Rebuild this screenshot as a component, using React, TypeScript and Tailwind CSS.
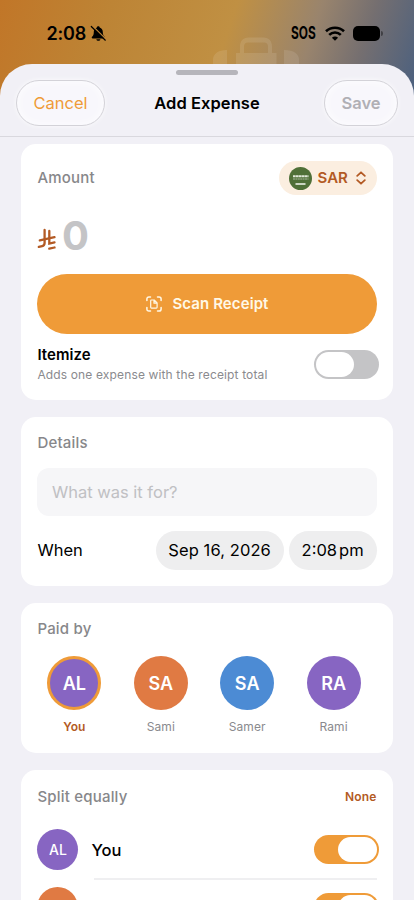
import React from 'react';
import clsx from 'clsx';

const people = [
  { initials: 'AL', name: 'You', color: 'bg-[#8765c2]' },
  { initials: 'SA', name: 'Sami', color: 'bg-[#e07a43]' },
  { initials: 'SA', name: 'Samer', color: 'bg-[#4c8bd4]' },
  { initials: 'RA', name: 'Rami', color: 'bg-[#8765c2]' },
];

function BellOff() {
  return (
    <svg width="17" height="17" viewBox="0 0 17 17" fill="none">
      <path d="M8.3 1.2c-.8 0-1.3.5-1.4 1.2C4.900 3.100 3.800 4.800 3.800 7c0 2.500-.5 3.500-1.500 4.500-.5.5-.6.8-.6 1.100 0 .5.3.8.9.8H14c.6 0 .9-.3.9-.8 0-.3-.1-.6-.6-1.100-1-1-1.500-2-1.500-4.500 0-2.200-1.100-3.900-3.100-4.600-.1-.7-.6-1.200-1.400-1.200z" fill="black" />
      <path d="M6.300 14.200h4.100c-.2 1-1 1.600-2 1.600s-1.900-.6-2.100-1.600z" fill="black" />
      <path d="M2.300 0.800 L16.300 14.500" stroke="#c08637" strokeWidth="1.200" />
      <path d="M1.300 1.500 L15.300 15.200" stroke="black" strokeWidth="1.200" strokeLinecap="round" />
    </svg>
  );
}

function Wifi() {
  return (
    <svg width="20" height="15" viewBox="0 0 20 15" fill="none" stroke="black" strokeWidth="2.600">
      <path d="M1 5.300C6 .5 14 .5 19 5.300" />
      <path d="M4.200 8.900c3.300-3.200 8.300-3.200 11.600 0" />
      <path d="M6.900 11.700c1.800-1.700 4.400-1.700 6.200 0L10 14.800z" fill="black" stroke="none" />
    </svg>
  );
}

function StatusBar() {
  return (
    <div className="relative flex h-16 items-start justify-between pl-[46.500px] pr-[31.500px] pt-[23px]">
      <div className="flex h-[21px] items-center">
        <span className="w-[39px] whitespace-nowrap text-[18px] font-semibold tracking-[-0.2px]">2:08</span>
        <span className="ml-[4px]"><BellOff /></span>
      </div>
      <div className="flex h-[21px] items-center">
        <span className="mt-px w-[26px] origin-left scale-x-[0.7] whitespace-nowrap text-[17px] font-bold">SOS</span>
        <span className="ml-[8px]"><Wifi /></span>
        <span className="ml-[8px] h-[15px] w-[27px] rounded-[5px] bg-black" />
        <span className="ml-[1px] h-[5px] w-[1.500px] rounded-r-full bg-black/40" />
      </div>
    </div>
  );
}

function Suitcase() {
  return (
    <svg className="absolute left-[212px] top-[36px]" width="90" height="40" viewBox="0 0 90 40" fill="none">
      <g opacity="0.100">
        <path d="M24 40V17h4v-6c0-6 3-9.500 8.500-9.500h15C57 1.500 60 5 60 11v6h4.500v23zM32 17h24v-6c0-3-1-4.500-4-4.500H36c-3 0-4 1.500-4 4.500z" fill="white" fillRule="evenodd" />
        <path d="M15 14v26H1V24c0-6 5-10 14-10zM72 14v26h15V24c0-6-5-10-15-10z" fill="white" />
      </g>
    </svg>
  );
}

function RiyalSign() {
  return (
    <svg width="19" height="22" viewBox="0 0 19 22" fill="none" stroke="#b35a24" strokeWidth="2.300" strokeLinecap="round">
      <path d="M7.600 2v13c0 1.800-.7 2.700-2.400 3.100l-3.400.8" />
      <path d="M12.300 3V15.500l5.200-1.200" />
      <path d="M2.800 12.400l14.700-3.200" />
      <path d="M12.300 20.700l5.200-1.200" />
    </svg>
  );
}

function SaudiFlag() {
  return (
    <svg width="23" height="23" viewBox="0 0 23 23">
      <circle cx="11.500" cy="11.500" r="11.500" fill="#4f7038" />
      <path d="M4 9.200h15.500" stroke="#dfe7d8" strokeWidth="2" strokeDasharray="2.600 .3" />
      <path d="M4 12h15.500" stroke="#e8eee2" strokeWidth="1" strokeDasharray="2 .4" opacity=".6" />
      <path d="M6.500 17h10M15 16.200v1.600" stroke="#f4f7f0" strokeWidth="1.300" />
    </svg>
  );
}

function ScanIcon() {
  return (
    <svg width="16" height="16" viewBox="0 0 16 16" fill="none" stroke="#fff8e6" strokeWidth="1.500" strokeLinecap="round" strokeLinejoin="round">
      <path d="M.9 4.500V3c0-1.400.7-2.100 2.100-2.100h1.500M11.500.9H13c1.400 0 2.100.7 2.100 2.100v1.500M15.100 11.500V13c0 1.400-.7 2.100-2.100 2.100h-1.500M4.500 15.100H3C1.600 15.100.9 14.400.9 13v-1.500" />
      <path d="M5.500 4h2.700l2.900 3v4.300c0 .5-.3.8-.8.800H5.500c-.5 0-.8-.3-.8-.8V4.800c0-.5.300-.8.800-.8zM8 4.200v3h3" strokeWidth="1.200" />
    </svg>
  );
}

function Toggle({ on }: { on?: boolean }) {
  return (
    <div
      className={clsx(
        '-mr-[2px] flex h-[29px] w-[65px] shrink-0 items-center rounded-full px-[2px]',
        on ? 'justify-end bg-[#ef9b38]' : 'bg-[#c4c4c6]'
      )}
    >
      <div className="h-[25px] w-[38.500px] rounded-full bg-white" />
    </div>
  );
}

function Card({ className, children }: { className?: string; children: React.ReactNode }) {
  return (
    <section className={clsx('flex shrink-0 flex-col rounded-[15px] bg-white px-[16.400px]', className)}>
      {children}
    </section>
  );
}

function Title({ children }: { children: React.ReactNode }) {
  return <h2 className="whitespace-nowrap text-[15px] font-medium leading-5 tracking-[0.2px] text-[#87878a]">{children}</h2>;
}

const glass = 'flex h-[46px] items-center justify-center rounded-full border border-[#d3d2d8] bg-[#f8f7fc] shadow-[inset_0_0_8px_1px_rgba(255,255,255,0.7),0_0_5px_rgba(255,255,255,0.8)]';

export default function App() {
  return (
    <div className="relative flex h-[900px] w-[414px] flex-col overflow-hidden bg-[#f1f0f6] font-['Inter','Liberation_Sans',sans-serif] text-black">
      <div className="absolute inset-x-0 top-0 h-[110px] bg-[linear-gradient(108deg,#c17628_0%,#bd8435_25%,#c09043_53%,#99846d_72%,#756f70_84%,#485f80_100%)]" />
      <Suitcase />
      <StatusBar />

      <main className="relative flex flex-1 flex-col overflow-hidden rounded-t-[32px] bg-[#f1f0f6]">
        <header className="relative flex h-[73px] shrink-0 items-start justify-between border-b border-[#d9d8de] px-4 pt-4">
          <div className="absolute left-[176px] top-[6px] h-[4.500px] w-[62px] rounded-full bg-[#b6b5bb]" />
          <button className={clsx(glass, 'w-[89px] text-[16.500px] text-[#ef9b38]')}>Cancel</button>
          <h1 className="absolute inset-x-0 top-[27px] text-center text-[16.500px] font-semibold leading-6 tracking-[0.05px]">Add Expense</h1>
          <button className={clsx(glass, 'w-[74px] text-[16.500px] font-semibold text-[#b0afb5]')}>Save</button>
        </header>

        <div className="flex flex-col gap-[17px] px-[21px] pt-[7px]">
          <Card className="h-[256px]">
            <div className="mt-[17px] flex h-[34px] items-center justify-between">
              <Title>Amount</Title>
              <div className="flex h-[34px] w-[98px] items-center rounded-full bg-[#fbeee0] pl-[10px] text-[#b35a24]">
                <SaudiFlag />
                <span className="ml-[6px] mt-px w-[31px] text-[15px] font-semibold">SAR</span>
                <svg className="ml-[7px]" width="10" height="14" viewBox="0 0 10 14" fill="none" stroke="currentColor" strokeWidth="1.800" strokeLinecap="round" strokeLinejoin="round">
                  <path d="M1.200 4.800 5 1.300l3.800 3.500M1.200 9.200 5 12.700l3.800-3.500" />
                </svg>
              </div>
            </div>
            <div className="mt-[16px] flex h-[50px] items-center">
              <span className="mt-[5px]"><RiyalSign /></span>
              <span className="-mt-px ml-[5.500px] text-[40px] font-bold leading-[48px] text-[#c4c4c6]">0</span>
            </div>
            <button className="mt-[13px] flex h-[59.500px] shrink-0 items-center justify-center rounded-full bg-[#ef9b38] pl-px text-[15px] font-semibold text-[#fff8e6]">
              <ScanIcon />
              <span className="ml-[10px] mt-px tracking-[0.1px]">Scan Receipt</span>
            </button>
            <div className="mt-[10px] flex items-start justify-between">
              <div>
                <p className="mt-px text-[15px] font-semibold leading-5 tracking-[0.05px]">Itemize</p>
                <p className="mt-px text-[12px] leading-[18px] tracking-[0.14px] text-[#8a8a8e]">Adds one expense with the receipt total</p>
              </div>
              <div className="mt-[6px]"><Toggle /></div>
            </div>
          </Card>

          <Card className="h-[169px]">
            <div className="mt-[16px]"><Title>Details</Title></div>
            <div className="mt-[15px] flex h-[48px] items-center rounded-[12px] bg-[#f6f6f8] px-[14.500px] text-[16.500px] text-[#c0c0c3]">
              What was it for?
            </div>
            <div className="mt-[15px] flex h-[39px] items-center text-[16.500px]">
              <span className="flex-1">When</span>
              <span className="flex h-[39px] w-[128px] items-center justify-center whitespace-nowrap rounded-full bg-[#eeeeef] tracking-[0.1px]">Sep 16, 2026</span>
              <span className="ml-[5px] flex h-[39px] w-[88px] items-center justify-center gap-[2px] rounded-full bg-[#eeeeef]">
                <span>2:08</span>
                <span>pm</span>
              </span>
            </div>
          </Card>

          <Card className="h-[150px]">
            <div className="mt-[16px]"><Title>Paid by</Title></div>
            <div className="mt-[17px] flex gap-[12.400px]">
              {people.map((p, i) => (
                <div key={p.name} className="flex w-[74px] shrink-0 flex-col items-center">
                  <div
                    className={clsx(
                      'flex size-[54px] items-center justify-center rounded-full text-[18px] font-semibold text-white',
                      p.color,
                      i === 0 && 'border-[3px] border-[#ef9b38]'
                    )}
                  >
                    {p.initials}
                  </div>
                  <span className={clsx('mt-[9px] text-[12px] leading-4 tracking-[0.1px]', i === 0 ? 'font-semibold text-[#b35a24]' : 'text-[#8a8a8e]')}>
                    {p.name}
                  </span>
                </div>
              ))}
            </div>
          </Card>

          <Card className="h-[260px]">
            <div className="mt-[17px] flex h-5 items-center justify-between">
              <Title>Split equally</Title>
              <span className="text-[12px] font-semibold tracking-[0.2px] text-[#b35a24]">None</span>
            </div>
            <div className="mt-[14px] flex flex-col">
              {people.slice(0, 2).map((p) => (
                <div key={p.name} className="relative -top-[0.500px] flex h-[58px] shrink-0 items-center">
                  <div className={clsx('flex size-[41px] items-center justify-center rounded-full text-[14px] font-medium leading-[10px] text-white', p.color)}>
                    {p.initials}
                  </div>
                  <span className="ml-[13px] flex-1 text-[16.500px] font-medium leading-[10px]">{p.name}</span>
                  <Toggle on />
                  <div className="absolute bottom-[-1px] left-[57px] right-0 h-[1.500px] bg-[#efeff1]" />
                </div>
              ))}
            </div>
          </Card>
        </div>
      </main>
    </div>
  );
}
